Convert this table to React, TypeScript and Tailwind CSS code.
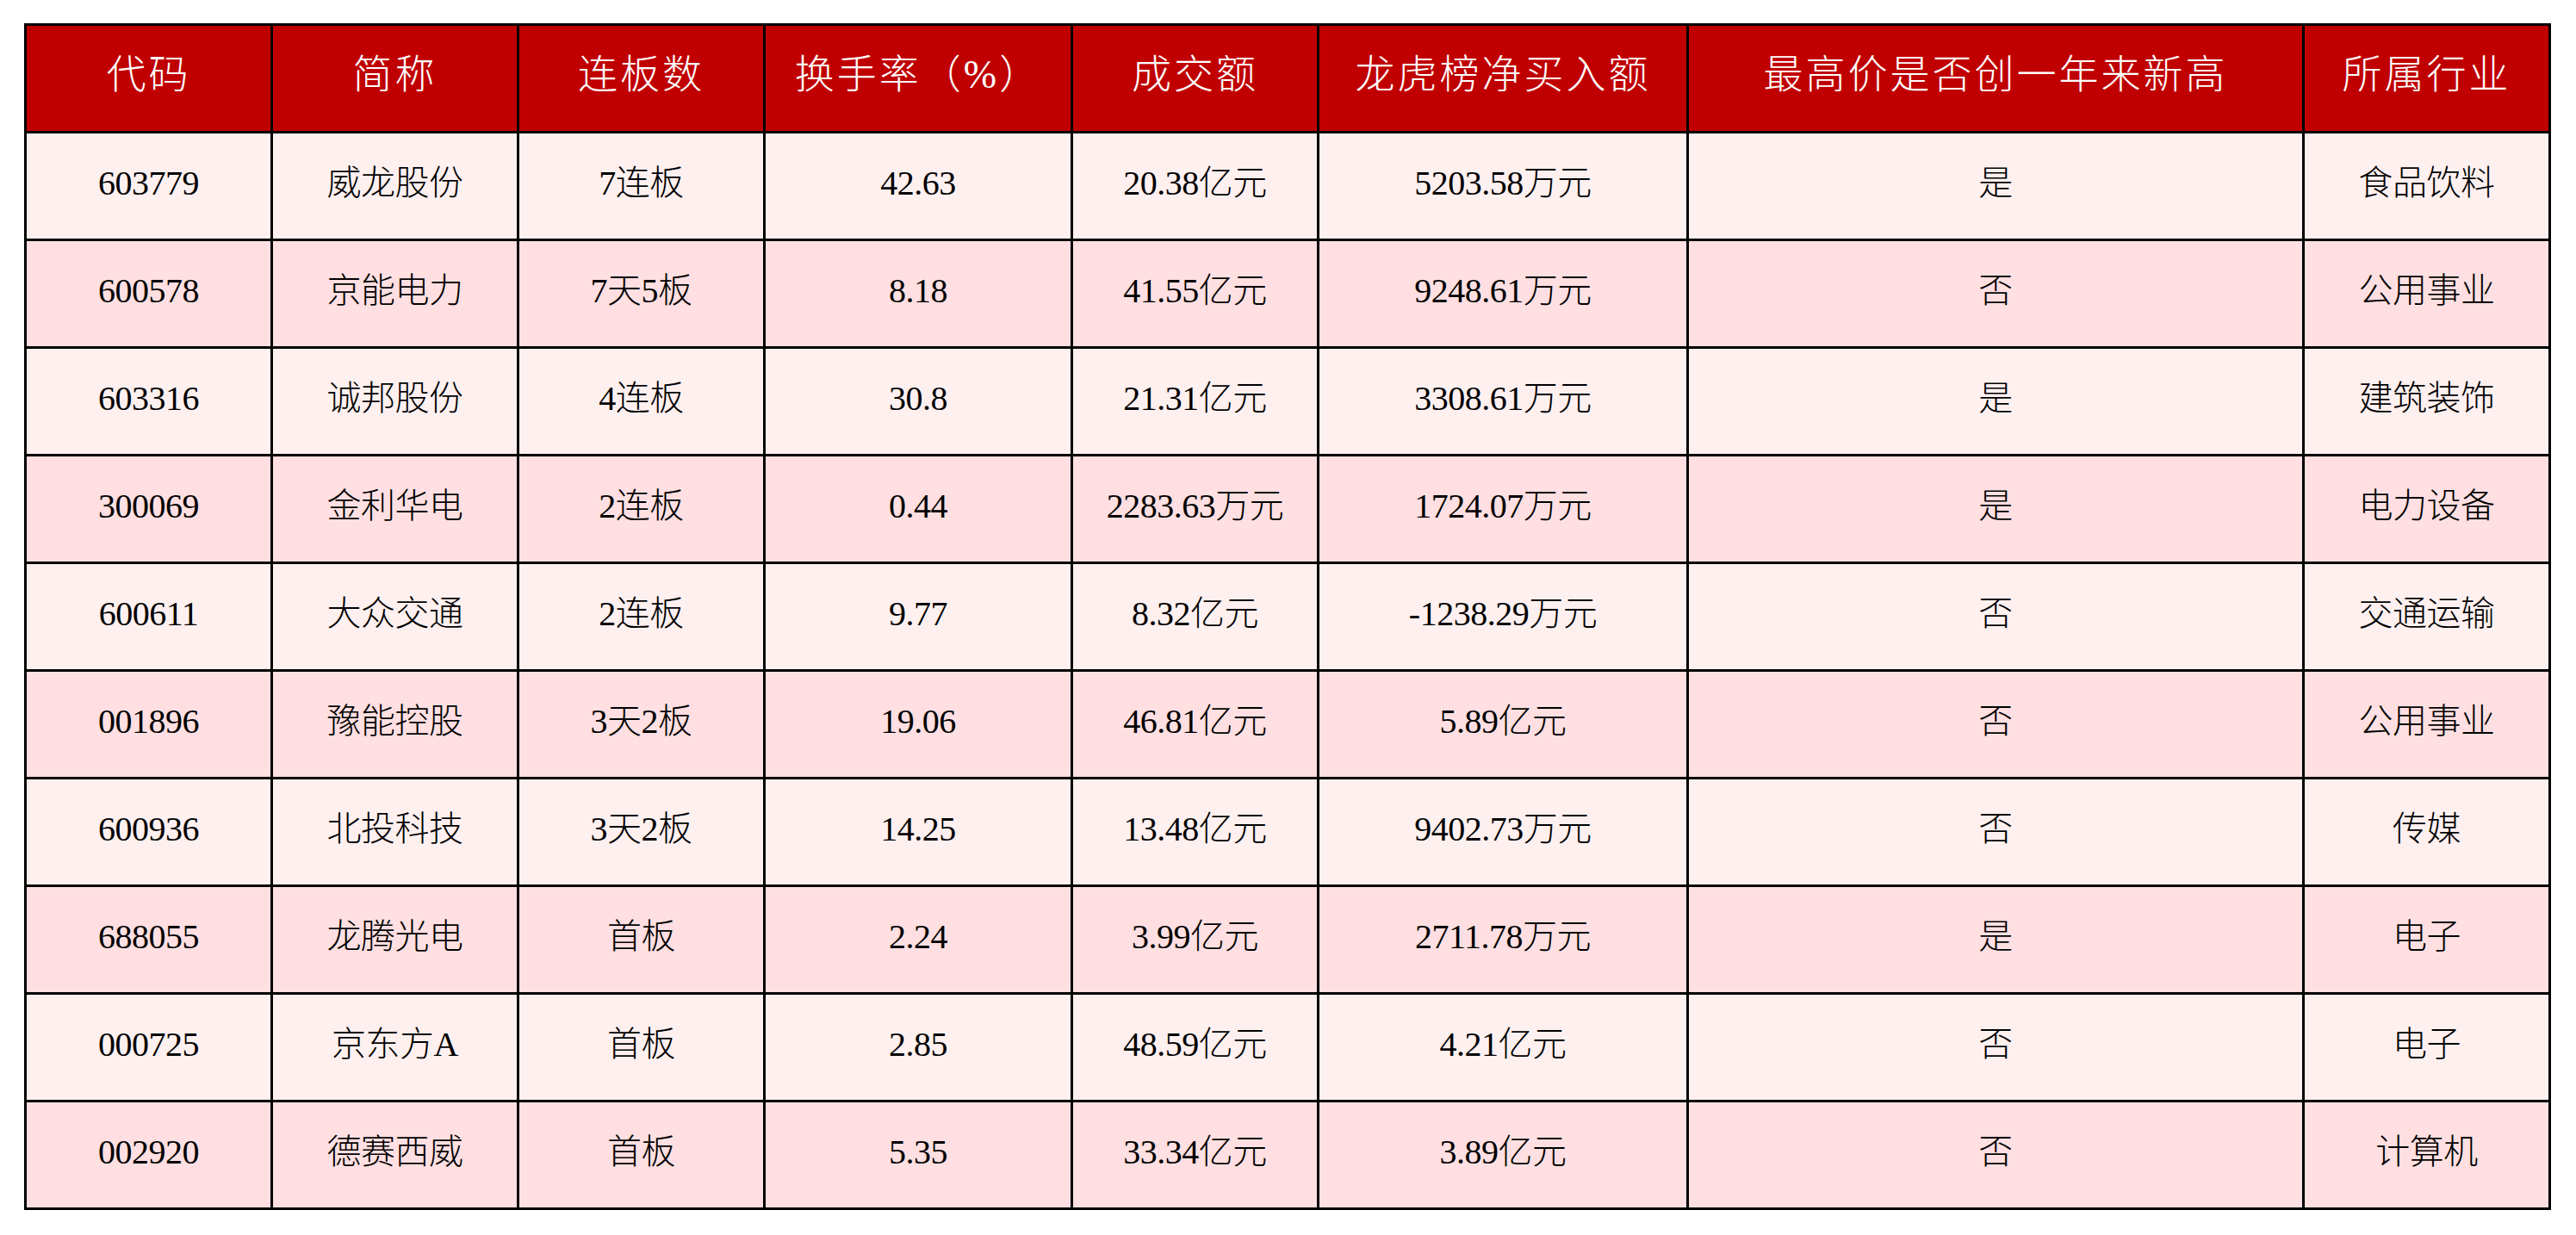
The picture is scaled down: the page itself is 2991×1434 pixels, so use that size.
import React from "react";

const headers = ["代码", "简称", "连板数", "换手率（%）", "成交额", "龙虎榜净买入额", "最高价是否创一年来新高", "所属行业"];

const rows: string[][] = [
  ["603779", "威龙股份", "7连板", "42.63", "20.38亿元", "5203.58万元", "是", "食品饮料"],
  ["600578", "京能电力", "7天5板", "8.18", "41.55亿元", "9248.61万元", "否", "公用事业"],
  ["603316", "诚邦股份", "4连板", "30.8", "21.31亿元", "3308.61万元", "是", "建筑装饰"],
  ["300069", "金利华电", "2连板", "0.44", "2283.63万元", "1724.07万元", "是", "电力设备"],
  ["600611", "大众交通", "2连板", "9.77", "8.32亿元", "-1238.29万元", "否", "交通运输"],
  ["001896", "豫能控股", "3天2板", "19.06", "46.81亿元", "5.89亿元", "否", "公用事业"],
  ["600936", "北投科技", "3天2板", "14.25", "13.48亿元", "9402.73万元", "否", "传媒"],
  ["688055", "龙腾光电", "首板", "2.24", "3.99亿元", "2711.78万元", "是", "电子"],
  ["000725", "京东方A", "首板", "2.85", "48.59亿元", "4.21亿元", "否", "电子"],
  ["002920", "德赛西威", "首板", "5.35", "33.34亿元", "3.89亿元", "否", "计算机"],
];

export default function App() {
  return (
    <div className="w-[2991px] h-[1434px] bg-white pt-[27px] pl-[28px]">
      <div
        className="grid w-max bg-black p-[3px] gap-[3px] grid-cols-[283px_283px_283px_354px_283px_426px_712px_283px] auto-rows-[122px]"
        style={{ fontFamily: "'Liberation Serif', 'Noto Sans CJK SC', serif" }}
      >
        {headers.map((h) => (
          <div
            key={h}
            className="bg-[#c00000] text-white flex items-center justify-center text-[46px] font-light tracking-[3px] leading-none pb-[8px]"
          >
            {h}
          </div>
        ))}
        {rows.map((r, i) =>
          r.map((c, j) => (
            <div
              key={i + "-" + j}
              className={
                (i % 2 === 0 ? "bg-[#fff0f0]" : "bg-[#ffdfe1]") +
                " text-black flex items-center justify-center text-[40px] font-light tracking-[-0.5px] leading-none pb-[6px]"
              }
            >
              {c}
            </div>
          ))
        )}
      </div>
    </div>
  );
}
